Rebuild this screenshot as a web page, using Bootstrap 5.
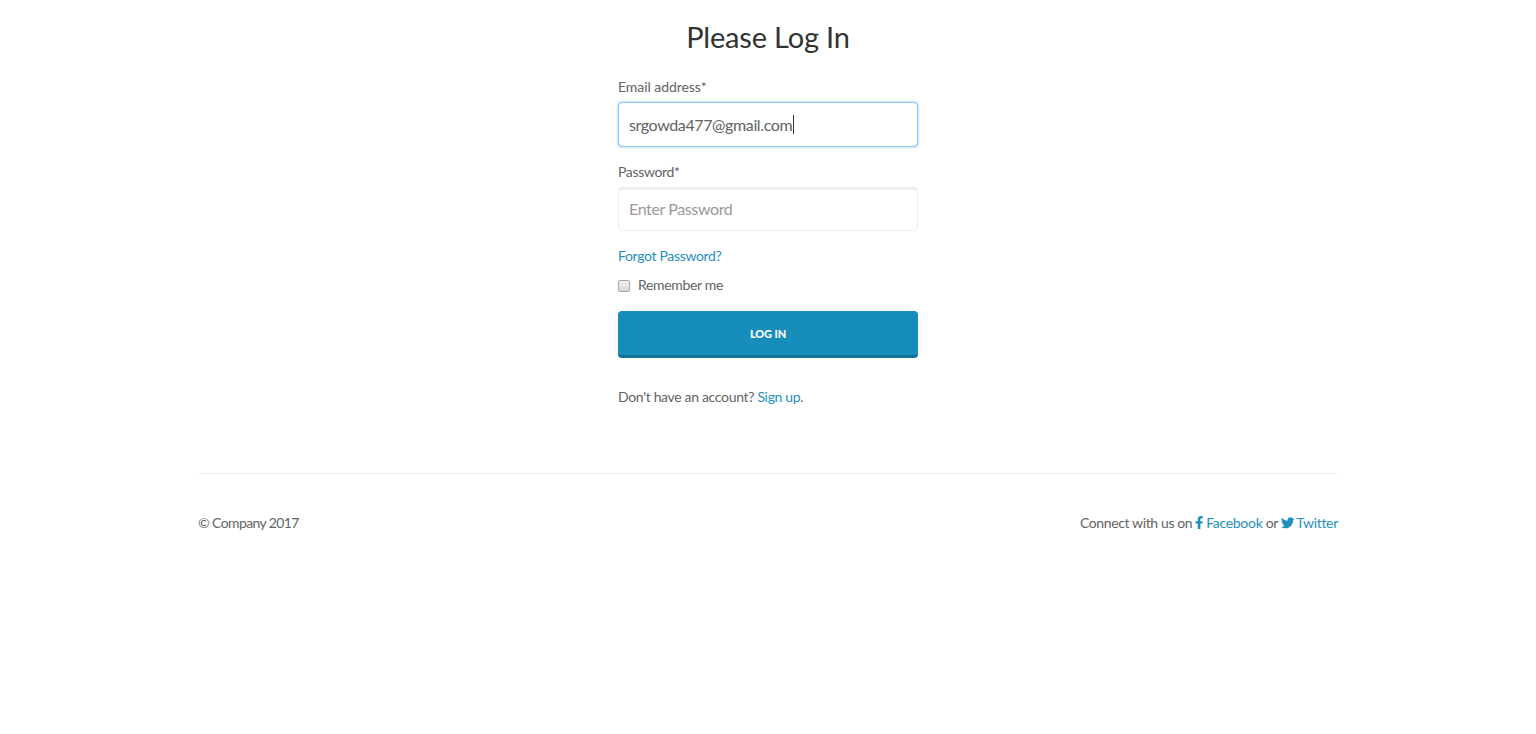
<!DOCTYPE html>
<html lang="en">
<head>
<meta charset="utf-8">
<title>Please Log In</title>
<link href="https://cdn.jsdelivr.net/npm/bootstrap@5.3.0/dist/css/bootstrap.min.css" rel="stylesheet">
<style>
body{font-family:"Lato","Noto Sans",sans-serif;font-size:14px;letter-spacing:-.33px;color:#636363;background:#fff;line-height:20px;}
a{color:#1f8fbd;text-decoration:none;}
.page-wrap{width:1140px;margin:0 auto;}
.login-title{font-size:29px;letter-spacing:-.18px;line-height:36px;font-weight:400;color:#333;text-align:center;margin:19px 0 22px;}
.login-form{width:300px;margin:0 auto;}
.field-label{display:block;margin:0 0 5px;line-height:20px;}
.label-email{letter-spacing:-.06px;}
.field-input{height:44px;padding:3px 10px 6px;font-size:16px;letter-spacing:-.38px;color:#636363;border:1px solid #eee;border-top:3px solid #eee;border-radius:4px;box-shadow:none;}
.field-input::placeholder{color:#999;}
.field-input.is-active{height:45px;padding:6px 10px;border:1px solid #8ec9f3;box-shadow:0 0 3px rgba(102,175,233,.7);}
.field-block{margin-bottom:15px;}
.caret-wrap{position:relative;}
.text-caret{position:absolute;left:175px;top:13px;width:1px;height:19px;background:#333;}
.forgot-row{margin-top:15px;margin-bottom:9px;line-height:20px;}
.remember-row{display:flex;align-items:center;gap:8px;margin-bottom:16px;height:20px;}
.remember-box{width:12px;height:12px;margin:1px 0 0;border:1px solid #aaa;border-radius:2px;background:linear-gradient(#f0f0f0,#d8d8d8);appearance:none;}
.login-btn{display:block;width:100%;height:47px;background:#178dbb;border:0;border-bottom:3px solid #126f95;border-radius:4px;color:#fff;font-size:11px;font-weight:900;letter-spacing:-.1px;text-transform:uppercase;padding:2px 0 0;}
.signup-row{margin-top:29px;margin-bottom:0;}
.footer-rule{margin:66px 0 39px;border:0;border-top:1px solid #eee;opacity:1;}
.company-text{letter-spacing:-.6px;}
.connect-text{letter-spacing:-.38px;}
.connect-text a{letter-spacing:-.3px;}
.foot-icon{height:13.5px;width:auto;vertical-align:-1px;fill:#1f8fbd;margin-right:-1px;}
</style>
</head>
<body>
<div class="page-wrap">
  <h1 class="login-title">Please Log In</h1>
  <form class="login-form">
    <div class="field-block">
      <label class="field-label label-email" for="em">Email address*</label>
      <div class="caret-wrap">
        <input id="em" type="text" class="form-control field-input is-active" value="srgowda477@gmail.com">
        <span class="text-caret"></span>
      </div>
    </div>
    <div>
      <label class="field-label" for="pw">Password*</label>
      <input id="pw" type="password" class="form-control field-input" placeholder="Enter Password">
    </div>
    <div class="forgot-row"><a href="#">Forgot Password?</a></div>
    <div class="remember-row"><input type="checkbox" class="remember-box" id="rm"><label for="rm">Remember me</label></div>
    <button type="button" class="login-btn">Log In</button>
    <p class="signup-row">Don't have an account? <a href="#">Sign up</a>.</p>
  </form>
  <hr class="footer-rule">
  <div class="d-flex justify-content-between">
    <span class="company-text">© Company 2017</span>
    <span class="connect-text">Connect with us on <a href="#"><svg class="foot-icon" viewBox="0 0 320 512"><path d="M279 288l14-93h-89v-60c0-25 12-50 52-50h41V6s-37-6-72-6c-73 0-121 44-121 125v70H23v93h81v224h100V288z"/></svg> Facebook</a> or <a href="#"><svg class="foot-icon" viewBox="0 0 512 512"><path d="M459 152c0 5 0 9 0 14 0 139-106 299-299 299-59 0-115-17-161-47 8 1 16 1 25 1 49 0 94-17 130-45-46-1-85-31-98-73 7 1 13 2 20 2 9 0 19-1 28-4-48-10-84-52-84-103v-1c14 8 30 13 47 13-28-19-47-51-47-87 0-20 5-37 14-53 52 64 129 105 216 110-2-8-3-16-3-24 0-58 47-105 105-105 30 0 58 13 77 33 24-5 47-14 67-26-8 25-24 46-46 59 21-2 42-8 60-16-14 21-32 39-52 54z"/></svg> Twitter</a></span>
  </div>
</div>
</body>
</html>
